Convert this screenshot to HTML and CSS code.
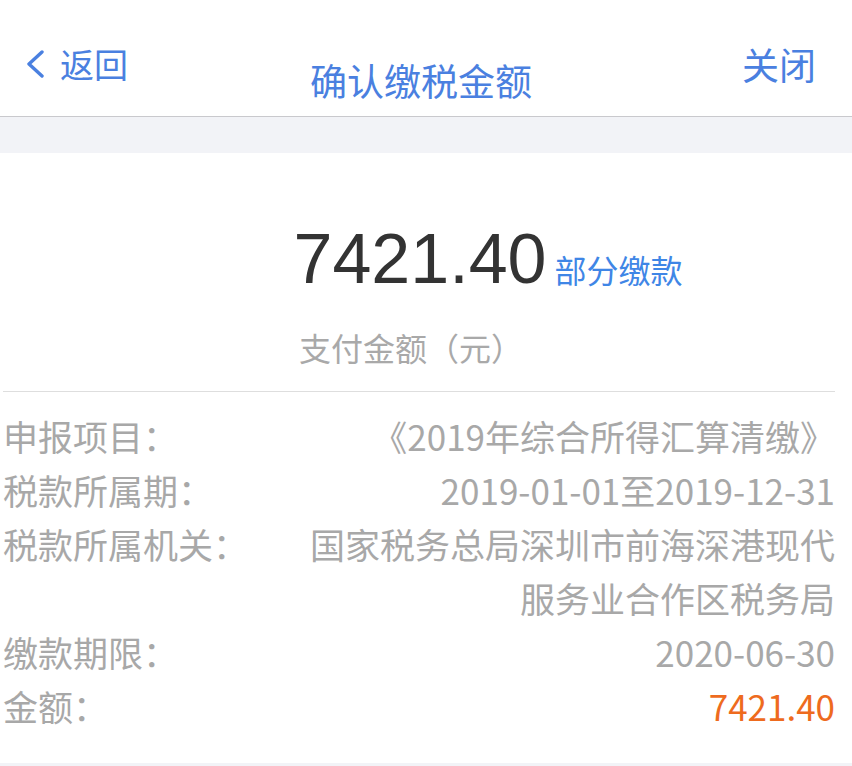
FILE: index.html
```html
<!DOCTYPE html>
<html lang="zh-CN">
<head>
    <meta charset="UTF-8">
    <meta name="viewport" content="width=device-width, initial-scale=1.0">
    <title>确认缴税金额</title>
    <link rel="stylesheet" href="styles.css">
</head>
<body>
    <header class="navbar">
        <a class="nav-back" href="#">
            <svg class="chevron" width="18" height="30" viewBox="0 0 18 30">
                <path d="M16 3 L3 15 L16 27" fill="none" stroke="currentColor" stroke-width="3.4" stroke-linecap="round" stroke-linejoin="round"/>
            </svg>
            <span>返回</span>
        </a>
        <h1 class="nav-title">确认缴税金额</h1>
        <a class="nav-close" href="#">关闭</a>
    </header>
    <div class="band"></div>

    <main class="sheet">
        <section class="summary">
            <div class="amount-line">
                <span></span>
                <span class="amount">7421.40</span>
                <span class="tag">部分缴款</span>
            </div>
            <p class="caption">支付金额（元）</p>
        </section>

        <dl class="details">
            <div class="row">
                <dt>申报项目：</dt>
                <dd>《2019年综合所得汇算清缴》</dd>
            </div>
            <div class="row">
                <dt>税款所属期：</dt>
                <dd>2019-01-01至2019-12-31</dd>
            </div>
            <div class="row">
                <dt>税款所属机关：</dt>
                <dd>国家税务总局深圳市前海深港现代服务业合作区税务局</dd>
            </div>
            <div class="row">
                <dt>缴款期限：</dt>
                <dd>2020-06-30</dd>
            </div>
            <div class="row">
                <dt>金额：</dt>
                <dd class="money">7421.40</dd>
            </div>
        </dl>
    </main>
    <div class="band band-bottom"></div>
</body>
</html>
```

FILE: styles.css
```css
body, html {
    margin: 0;
    padding: 0;
    background: #fff;
    font-family: "Noto Sans CJK SC", "Noto Sans", sans-serif;
}
.navbar {
    display: grid;
    grid-template-columns: 1fr auto 1fr;
    align-items: start;
    height: 116px;
    padding: 0 36px 0 26px;
    border-bottom: 1px solid #c9c9cd;
    box-sizing: content-box;
    color: #4a80e0;
}
.nav-back,
.nav-close {
    color: #4a80e0;
    text-decoration: none;
    line-height: 40px;
}
.nav-back {
    display: flex;
    align-items: center;
    gap: 16px;
    margin-top: 44px;
    justify-self: start;
    font-size: 34px;
}
.chevron {
    display: block;
}
.nav-title {
    margin: 60px 0 0;
    font-size: 37px;
    font-weight: normal;
    line-height: 40px;
    color: #4a80e0;
}
.nav-close {
    justify-self: end;
    margin-top: 44px;
    font-size: 37px;
}
.band {
    height: 36px;
    background: #f2f3f7;
}
.band-bottom {
    height: 40px;
}
.sheet {
    background: #fff;
}
.summary {
    padding-top: 66px;
    text-align: center;
}
.amount-line {
    display: grid;
    grid-template-columns: 1fr auto 1fr;
    align-items: baseline;
}
.amount {
    font-family: "Liberation Sans", Arial, sans-serif;
    font-size: 70px;
    line-height: 80px;
    color: #333;
    padding-right: 12px;
}
.tag {
    justify-self: start;
    margin-left: -4px;
    font-size: 32px;
    color: #3f86e6;
}
.caption {
    margin: 28px 0 0;
    font-size: 32px;
    line-height: 40px;
    color: #a9a9a9;
    padding-right: 30px;
}
.details {
    margin: 24px 17px 0 3px;
    padding: 17px 0 30px 0;
    border-top: 1px solid #dedede;
}
.row {
    display: flex;
    justify-content: space-between;
    align-items: flex-start;
    font-size: 35px;
    line-height: 54px;
    color: #a8a8a8;
}
.row dt {
    white-space: nowrap;
}
.row dd {
    margin: 0;
    max-width: 540px;
    text-align: right;
}
.row .money {
    color: #ee6b1e;
}
```
